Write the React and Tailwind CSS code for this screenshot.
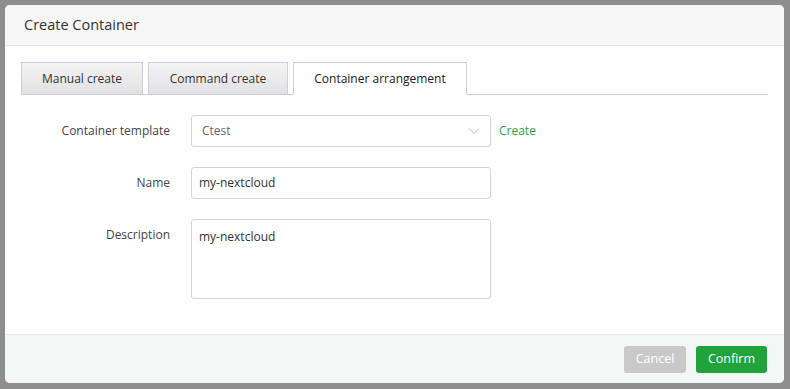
import React from 'react';

const font = { fontFamily: '"Open Sans", "Noto Sans", sans-serif' };

const tabs = [
    { label: 'Manual create', w: 'w-[122px]' },
    { label: 'Command create', w: 'w-[140px]' },
    { label: 'Container arrangement', w: 'w-[174px]', active: true },
];

const App = () => {
    return (
        <div className="w-[790px] h-[389px] bg-[#8e8e8e] p-[5px] pr-[6px] pb-[6px]" style={font}>
            <div className="w-full h-full bg-white rounded-[5px] overflow-hidden flex flex-col">
                {/* Header */}
                <div className="h-[41px] shrink-0 bg-[#f7f7f7] border-b border-[#e6e6e6] flex items-center pl-[19px]">
                    <span className="text-[14.5px] text-[#333]">Create Container</span>
                </div>

                {/* Body */}
                <div className="flex-1 px-4 pt-4">
                    {/* Tabs */}
                    <div className="flex items-end border-b border-[#cfcdd8] h-[33px]">
                        {tabs.map((t, i) => (
                            <div
                                key={t.label}
                                className={
                                    t.active
                                        ? `${t.w} h-[33px] -mb-px bg-white border border-[#cfcdd8] border-b-white flex items-center justify-center text-[12px] text-[#222] ml-[5px]`
                                        : `${t.w} h-[32px] bg-gradient-to-b from-[#f4f4f4] to-[#e1e1e1] border border-b-0 border-[#cfcdd8] flex items-center justify-center text-[12px] text-[#333] ${i > 0 ? 'ml-[5px]' : ''}`
                                }
                            >
                                {t.label}
                            </div>
                        ))}
                    </div>

                    {/* Form */}
                    <div className="mt-[20px] flex flex-col gap-5 text-[12px]">
                        <div className="flex items-center">
                            <label className="w-[149px] text-right text-[#444]">Container template</label>
                            <div className="ml-[21px] w-[300px] h-[32px] border border-[#d4d4d4] rounded-[3px] flex items-center justify-between px-[10px]">
                                <span className="text-[#666]">Ctest</span>
                                <svg width="12" height="8" viewBox="0 0 12 8" fill="none" stroke="#b8b8b8" strokeWidth="1">
                                    <path d="M1 1.5l5 5 5-5" />
                                </svg>
                            </div>
                            <span className="ml-[8px] text-[#1fa33a]">Create</span>
                        </div>

                        <div className="flex items-center">
                            <label className="w-[149px] text-right text-[#444]">Name</label>
                            <div className="ml-[21px] w-[300px] h-[32px] border border-[#d4d4d4] rounded-[3px] flex items-center px-[7px] text-[#333]">
                                my-nextcloud
                            </div>
                        </div>

                        <div className="flex items-start">
                            <label className="w-[149px] text-right text-[#444] pt-[7px]">Description</label>
                            <div className="ml-[21px] w-[300px] h-[80px] border border-[#d4d4d4] rounded-[3px] px-[7px] pt-[8px] text-[#333] leading-[18px]">
                                my-nextcloud
                            </div>
                        </div>
                    </div>
                </div>

                {/* Footer */}
                <div className="h-[49px] shrink-0 bg-[#f5f6f6] border-t border-[#e8e8e8] flex items-center justify-end gap-[10px] pr-[17px]">
                    <button className="w-[62px] h-[27px] rounded-[3px] bg-[#c9c9c9] text-white text-[12.5px]">Cancel</button>
                    <button className="w-[71px] h-[27px] rounded-[3px] bg-[#1fa33a] text-white text-[12.5px]">Confirm</button>
                </div>
            </div>
        </div>
    );
};

export default App;
